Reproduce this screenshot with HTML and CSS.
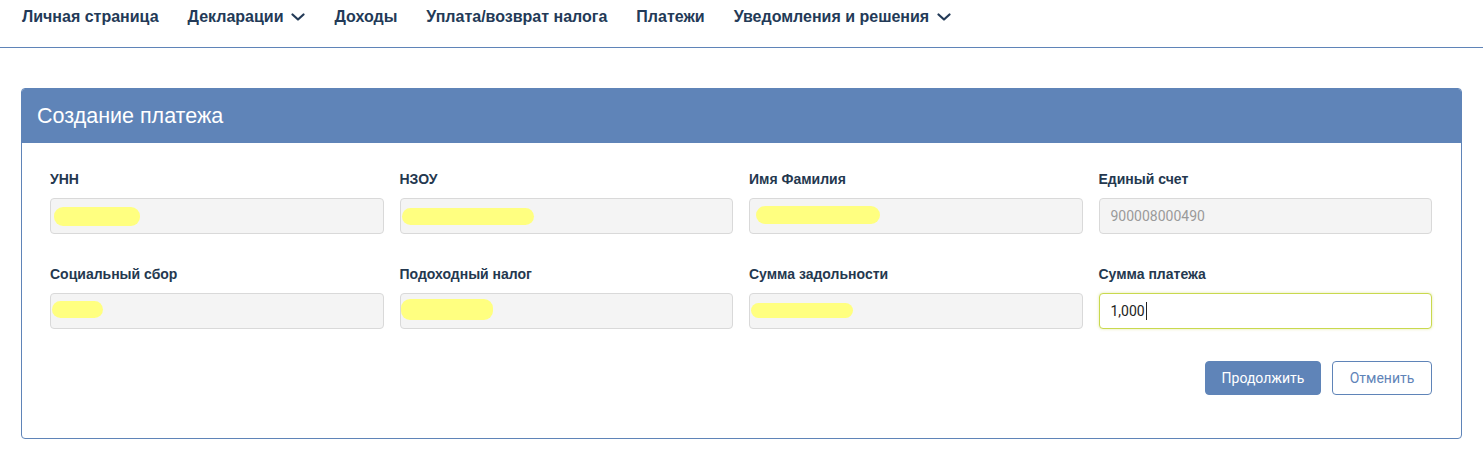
FILE: index.html
```html
<!DOCTYPE html>
<html lang="ru">

<head>
    <meta charset="UTF-8">
    <meta name="viewport" content="width=device-width, initial-scale=1.0">
    <title>Создание платежа</title>
    <link rel="stylesheet" href="styles.css">
</head>

<body>
    <nav class="topnav">
        <a href="#">Личная страница</a>
        <a href="#">Декларации
            <svg class="chevron" viewBox="0 0 14 8"><path d="M1.5 1.5 L7 6.5 L12.5 1.5" /></svg>
        </a>
        <a href="#">Доходы</a>
        <a href="#">Уплата/возврат налога</a>
        <a href="#">Платежи</a>
        <a href="#">Уведомления и решения
            <svg class="chevron" viewBox="0 0 14 8"><path d="M1.5 1.5 L7 6.5 L12.5 1.5" /></svg>
        </a>
    </nav>

    <div class="card">
        <div class="card-header">Создание платежа</div>

        <div class="card-body">
            <div class="form-grid">
                <div class="field">
                    <label>УНН</label>
                    <div class="input readonly">
                        <span class="mark mark-unp"></span>
                    </div>
                </div>
                <div class="field">
                    <label>НЗОУ</label>
                    <div class="input readonly">
                        <span class="mark mark-nzou"></span>
                    </div>
                </div>
                <div class="field">
                    <label>Имя Фамилия</label>
                    <div class="input readonly">
                        <span class="mark mark-name"></span>
                    </div>
                </div>
                <div class="field">
                    <label>Единый счет</label>
                    <div class="input readonly muted">900008000490</div>
                </div>

                <div class="field">
                    <label>Социальный сбор</label>
                    <div class="input readonly">
                        <span class="mark mark-social"></span>
                    </div>
                </div>
                <div class="field">
                    <label>Подоходный налог</label>
                    <div class="input readonly">
                        <span class="mark mark-income"></span>
                    </div>
                </div>
                <div class="field">
                    <label>Сумма задольности</label>
                    <div class="input readonly">
                        <span class="mark mark-debt"></span>
                    </div>
                </div>
                <div class="field">
                    <label>Сумма платежа</label>
                    <div class="input focused"><span class="caret">1,000</span></div>
                </div>
            </div>

            <div class="actions">
                <button class="btn btn-primary">Продолжить</button>
                <button class="btn btn-outline">Отменить</button>
            </div>
        </div>
    </div>
</body>

</html>
```

FILE: styles.css
```css
* {
    margin: 0;
    padding: 0;
    box-sizing: border-box;
}

body {
    font-family: 'Liberation Sans', Arial, sans-serif;
    background: #fff;
    color: #24384f;
}

/* верхнее меню */
.topnav {
    height: 48px;
    border-bottom: 1px solid #5f84b8;
    display: flex;
    gap: 29px;
    padding-left: 22px;
}

.topnav a {
    display: flex;
    align-items: center;
    gap: 8px;
    height: 34px;
    color: #233a57;
    font-weight: bold;
    font-size: 16px;
    text-decoration: none;
}

.chevron {
    width: 14px;
    height: 8px;
    fill: none;
    stroke: #233a57;
    stroke-width: 2.2;
    stroke-linecap: round;
    stroke-linejoin: round;
}

/* карточка */
.card {
    margin: 40px 0 0 21px;
    width: 1441px;
    border: 1px solid #5f84b8;
    border-radius: 4px;
    overflow: hidden;
}

.card-header {
    height: 54px;
    background: #5f84b8;
    color: #fff;
    font-size: 21.5px;
    line-height: 54px;
    padding-left: 15px;
}

.card-body {
    padding: 28px 29px 43px 28px;
}

.form-grid {
    display: grid;
    grid-template-columns: repeat(4, 1fr);
    column-gap: 16px;
    row-gap: 32px;
}

.field label {
    display: block;
    font-size: 14px;
    font-weight: bold;
    line-height: 16px;
    margin-bottom: 11px;
    color: #24384f;
}

.input {
    height: 36px;
    border: 1px solid #d9d9d9;
    border-radius: 4px;
    padding: 0 11px;
    display: flex;
    align-items: center;
    font-family: Roboto, 'Liberation Sans', sans-serif;
    font-size: 14px;
    position: relative;
}

.input.readonly {
    background: #f4f4f4;
}

.input.muted {
    color: #9a9a9a;
}

.input.focused {
    background: #fff;
    border-color: #c9d94e;
    box-shadow: 0 0 3px rgba(190, 205, 60, 0.45);
    color: #222;
}

.caret {
    border-right: 1px solid #222;
    padding-right: 1px;
    line-height: 18px;
}

/* закрашенные данные */
.mark {
    position: absolute;
    background: #ffff80;
    border-radius: 9px;
    height: 17px;
}

.mark-unp {
    left: 3px;
    top: 8px;
    width: 86px;
    height: 19px;
}

.mark-nzou {
    left: 1px;
    top: 9px;
    width: 132px;
}

.mark-name {
    left: 6px;
    top: 7px;
    width: 124px;
    height: 18px;
}

.mark-social {
    left: 1px;
    top: 7px;
    width: 51px;
}

.mark-income {
    left: 0;
    top: 5px;
    width: 92px;
    height: 21px;
}

.mark-debt {
    left: 1px;
    top: 9px;
    width: 102px;
    height: 15px;
}

/* кнопки */
.actions {
    display: flex;
    justify-content: flex-end;
    gap: 11px;
    margin-top: 32px;
}

.btn {
    height: 34px;
    border-radius: 4px;
    font-family: Roboto, 'Liberation Sans', sans-serif;
    font-size: 14px;
    cursor: pointer;
}

.btn-primary {
    width: 116px;
    background: #5f84b8;
    border: 1px solid #5f84b8;
    color: #fff;
}

.btn-outline {
    width: 100px;
    background: #fff;
    border: 1px solid #5f84b8;
    color: #5f84b8;
}
```
